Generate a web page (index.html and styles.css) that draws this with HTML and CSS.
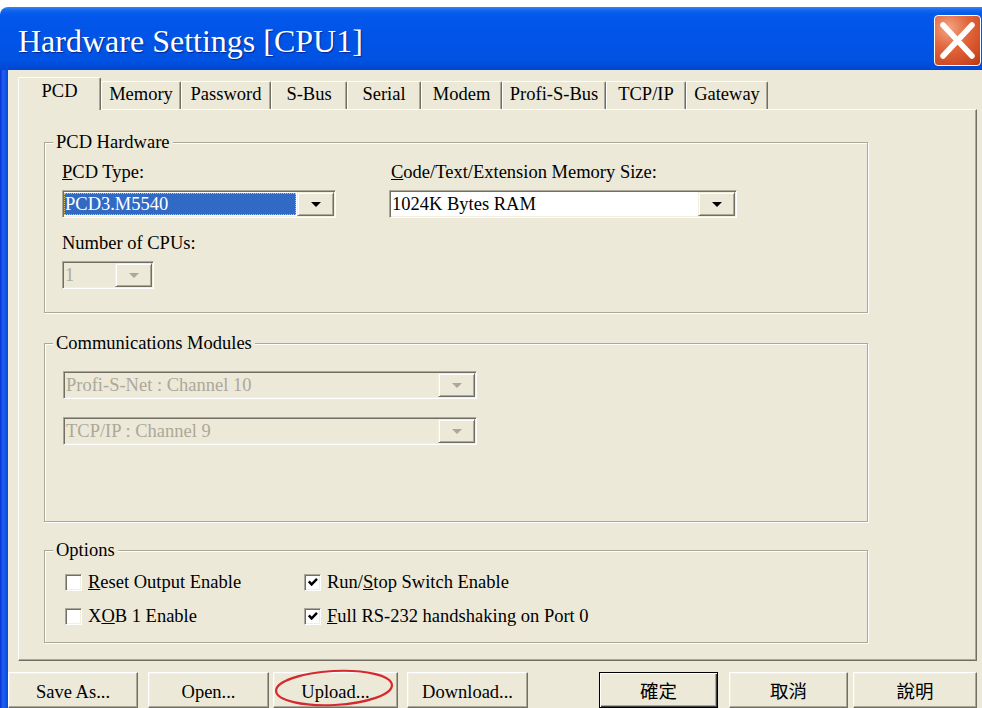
FILE: index.html
```html
<!DOCTYPE html>
<html lang="en">
<head>
<meta charset="utf-8">
<title>Hardware Settings [CPU1]</title>
<link rel="stylesheet" href="styles.css">
</head>
<body>
<div class="window">
  <header class="titlebar">
    <h1 class="title">Hardware Settings [CPU1]</h1>
    <button class="close" aria-label="Close">
      <svg viewBox="0 0 45 49" width="45" height="49"><path d="M8 9 L37 40 M37 9 L8 40" stroke="#fff" stroke-width="5.5" stroke-linecap="round"/></svg>
    </button>
  </header>
  <div class="frame">
    <div class="frame-edge"></div>
    <div class="client">
      <nav class="tabs">
        <div class="tab active">PCD</div>
        <div class="tab">Memory</div>
        <div class="tab">Password</div>
        <div class="tab">S-Bus</div>
        <div class="tab">Serial</div>
        <div class="tab">Modem</div>
        <div class="tab">Profi-S-Bus</div>
        <div class="tab">TCP/IP</div>
        <div class="tab">Gateway</div>
      </nav>

      <div class="panel">
        <section class="group group-hw">
          <h2 class="group-title">PCD Hardware</h2>
          <div class="hw-grid">
            <label class="field-label"><u>P</u>CD Type:</label>
            <label class="field-label label-mem"><u>C</u>ode/Text/Extension Memory Size:</label>
            <div class="combo">
              <span class="combo-text selected">PCD3.M5540</span>
              <span class="drop"><i class="arrow"></i></span>
            </div>
            <div class="combo">
              <span class="combo-text">1024K Bytes RAM</span>
              <span class="drop"><i class="arrow"></i></span>
            </div>
            <label class="field-label label-cpus">Number of CPUs:</label>
            <div class="combo combo-cpus disabled">
              <span class="combo-text">1</span>
              <span class="drop"><i class="arrow"></i></span>
            </div>
          </div>
        </section>

        <section class="group group-comm">
          <h2 class="group-title">Communications Modules</h2>
          <div class="comm-list">
            <div class="combo combo-wide disabled">
              <span class="combo-text">Profi-S-Net : Channel 10</span>
              <span class="drop"><i class="arrow"></i></span>
            </div>
            <div class="combo combo-wide disabled">
              <span class="combo-text">TCP/IP : Channel 9</span>
              <span class="drop"><i class="arrow"></i></span>
            </div>
          </div>
        </section>

        <section class="group group-opts">
          <h2 class="group-title">Options</h2>
          <div class="opts-grid">
            <label class="option"><span class="check"></span><span><u>R</u>eset Output Enable</span></label>
            <label class="option"><span class="check"><svg viewBox="0 0 14 14" width="14" height="14"><path d="M2.8 6.4 L5.6 9.4 L11 3.8" fill="none" stroke="#000" stroke-width="2.4"/></svg></span><span>Run/<u>S</u>top Switch Enable</span></label>
            <label class="option"><span class="check"></span><span>X<u>O</u>B 1 Enable</span></label>
            <label class="option"><span class="check"><svg viewBox="0 0 14 14" width="14" height="14"><path d="M2.8 6.4 L5.6 9.4 L11 3.8" fill="none" stroke="#000" stroke-width="2.4"/></svg></span><span><u>F</u>ull RS-232 handshaking on Port 0</span></label>
          </div>
        </section>
      </div>

      <div class="actions">
        <button class="btn">Save As...</button>
        <button class="btn">Open...</button>
        <button class="btn btn-upload">Upload...
          <svg class="mark" viewBox="0 0 128 46" width="128" height="46"><ellipse cx="62" cy="23" rx="58" ry="17" fill="none" stroke="#d42a2e" stroke-width="2.2" transform="rotate(-3 62 23)"/></svg>
        </button>
        <button class="btn">Download...</button>
        <button class="btn btn-default">確定</button>
        <button class="btn">取消</button>
        <button class="btn">說明</button>
      </div>
    </div>
  </div>
</div>
</body>
</html>
```

FILE: styles.css
```css
body {
  margin: 0;
  width: 982px;
  height: 708px;
  overflow: hidden;
  background: #fff;
  font-family: "Liberation Serif", "Noto Sans CJK TC", serif;
  font-size: 18.5px;
  color: #000;
}

/* window chrome */
.window {
  margin-top: 7px;
  height: 701px;
  display: flex;
  flex-direction: column;
  border-top-left-radius: 8px;
  overflow: hidden;
}

.titlebar {
  flex: none;
  height: 63px;
  display: flex;
  align-items: flex-start;
  background: linear-gradient(to bottom, #3a86f4 0, #1467f0 3px, #0459ec 7px, #0055e8 40%, #0052e2 85%, #0046d2 100%);
}

.title {
  flex: 1;
  margin: 18px 0 0 18px;
  font-size: 32px;
  font-weight: normal;
  line-height: 32px;
  color: #fff;
  text-shadow: 1px 1px 1px rgba(8, 26, 120, 0.75);
}

.close {
  margin: 8px 1px 0 0;
  width: 47px;
  height: 51px;
  padding: 0;
  border: 1px solid #fff;
  border-radius: 4px;
  background: radial-gradient(circle at 30% 25%, #f2a583 0, #e2683f 40%, #cf4a22 78%, #b9390f 100%);
  display: flex;
  align-items: center;
  justify-content: center;
}

.frame {
  flex: 1;
  display: flex;
  min-height: 0;
}

.frame-edge {
  width: 8px;
  background: linear-gradient(to right, #0831d9 0, #1e62ea 3px, #1358ea 5px, #0a47d8 8px);
}

.client {
  flex: 1;
  background: #ece9d8;
  padding: 7px 5px 0 10px;
  display: flex;
  flex-direction: column;
}

/* tab strip */
.tabs {
  display: grid;
  grid-template-columns: 83px 80px 90px 76px 74px 81px 104px 80px 82px;
  height: 32px;
  align-items: end;
  position: relative;
  z-index: 1;
}

.tab {
  box-sizing: border-box;
  height: 28px;
  padding-top: 2px;
  line-height: 20px;
  text-align: center;
  white-space: nowrap;
  border-top: 1px solid #fff;
  border-left: 1px solid #fff;
  border-right: 1px solid #716f64;
  box-shadow: inset -1px 0 #aca899;
  border-radius: 2px 2px 0 0;
}

.tab.active {
  height: 33px;
  margin-bottom: -1px;
  padding-top: 3px;
  background: #ece9d8;
}

/* page area under the tabs */
.panel {
  box-sizing: border-box;
  height: 556px;
  padding: 32px 0 0 25px;
  border: 1px solid;
  border-color: #fff #716f64 #716f64 #fff;
  box-shadow: inset -1px -1px #aca899;
}

.group {
  box-sizing: border-box;
  width: 824px;
  border: 1px solid #aca899;
  box-shadow: 1px 1px 0 #fff, inset 1px 1px 0 #fff;
}

.group-title {
  display: table;
  margin: -11px 0 0 8px;
  padding: 0 3px;
  background: #ece9d8;
  font-size: 18.5px;
  font-weight: normal;
  line-height: 20px;
}

.group-comm { margin-top: 30px; }
.group-opts { margin-top: 28px; }

.hw-grid {
  display: grid;
  grid-template-columns: 274px 348px;
  grid-template-rows: 22px 28px auto 28px;
  column-gap: 53px;
  row-gap: 7px;
  padding: 9px 0 23px 17px;
}

.field-label {
  line-height: 22px;
  white-space: nowrap;
}

.label-mem { padding-left: 2px; }

.label-cpus {
  grid-column: 1;
  margin-top: 7px;
}

.combo-cpus {
  grid-column: 1;
  width: 92px;
}

.comm-list {
  display: flex;
  flex-direction: column;
  gap: 18px;
  padding: 18px 0 76px 18px;
}

.combo-wide { width: 414px; }

/* drop-down list boxes */
.combo {
  box-sizing: border-box;
  height: 28px;
  display: flex;
  padding: 1px;
  background: #fff;
  border: 1px solid;
  border-color: #aca899 #fff #fff #aca899;
  box-shadow: inset 1px 1px #716f64, inset -1px -1px #f1efe2;
}

.combo-text {
  flex: 1;
  min-width: 0;
  padding-left: 1px;
  line-height: 24px;
  white-space: nowrap;
}

.combo-text.selected {
  margin: 1px 1px 1px 0;
  line-height: 22px;
  background: #316ac5;
  color: #fff;
  outline: 1px dotted #d8c27a;
  outline-offset: -1px;
}

.drop {
  box-sizing: border-box;
  width: 37px;
  display: flex;
  align-items: center;
  justify-content: center;
  background: #ece9d8;
  border: 1px solid;
  border-color: #f1efe2 #716f64 #716f64 #f1efe2;
  box-shadow: inset 1px 1px #fff, inset -1px -1px #aca899;
}

.arrow {
  width: 0;
  height: 0;
  border-left: 5px solid transparent;
  border-right: 5px solid transparent;
  border-top: 5px solid #000;
}

.combo.disabled { background: #ece9d8; }
.combo.disabled .combo-text { color: #aca899; }
.combo.disabled .arrow { border-top-color: #aca899; }

/* check boxes */
.opts-grid {
  display: grid;
  grid-template-columns: 239px auto;
  grid-auto-rows: 34px;
  padding: 5px 0 9px 20px;
}

.option {
  display: flex;
  align-items: center;
  gap: 6px;
  white-space: nowrap;
}

.check {
  box-sizing: border-box;
  width: 17px;
  height: 17px;
  display: flex;
  align-items: center;
  justify-content: center;
  background: #fff;
  border: 1px solid;
  border-color: #aca899 #fff #fff #aca899;
  box-shadow: inset 1px 1px #716f64, inset -1px -1px #f1efe2;
}

/* dialog buttons */
.actions {
  display: flex;
  margin: 11px 0 0 -10px;
  height: 36px;
}

.btn {
  box-sizing: border-box;
  height: 36px;
  padding: 4px 0 0;
  font: inherit;
  line-height: 22px;
  text-align: center;
  color: #000;
  background: #ece9d8;
  border: 1px solid;
  border-color: #fff #716f64 #716f64 #fff;
  box-shadow: inset -1px -1px #aca899, inset 1px 1px #f1efe2;
  display: block;
}

.btn:nth-child(1) { width: 130px; }
.btn:nth-child(2) { width: 121px; margin-left: 10px; }
.btn:nth-child(3) { width: 125px; margin-left: 4px; }
.btn:nth-child(4) { width: 121px; margin-left: 9px; }
.btn:nth-child(5) { width: 119px; margin-left: 71px; }
.btn:nth-child(6) { width: 119px; margin-left: 11px; }
.btn:nth-child(7) { width: 124px; margin-left: 5px; }

.btn-default {
  border-color: #000;
  box-shadow: inset 1px 1px #fff, inset -1px -1px #404040, inset -2px -2px #aca899;
}

.btn-upload { position: relative; }

.mark {
  position: absolute;
  left: -2px;
  top: -8px;
  overflow: visible;
  pointer-events: none;
}
```
